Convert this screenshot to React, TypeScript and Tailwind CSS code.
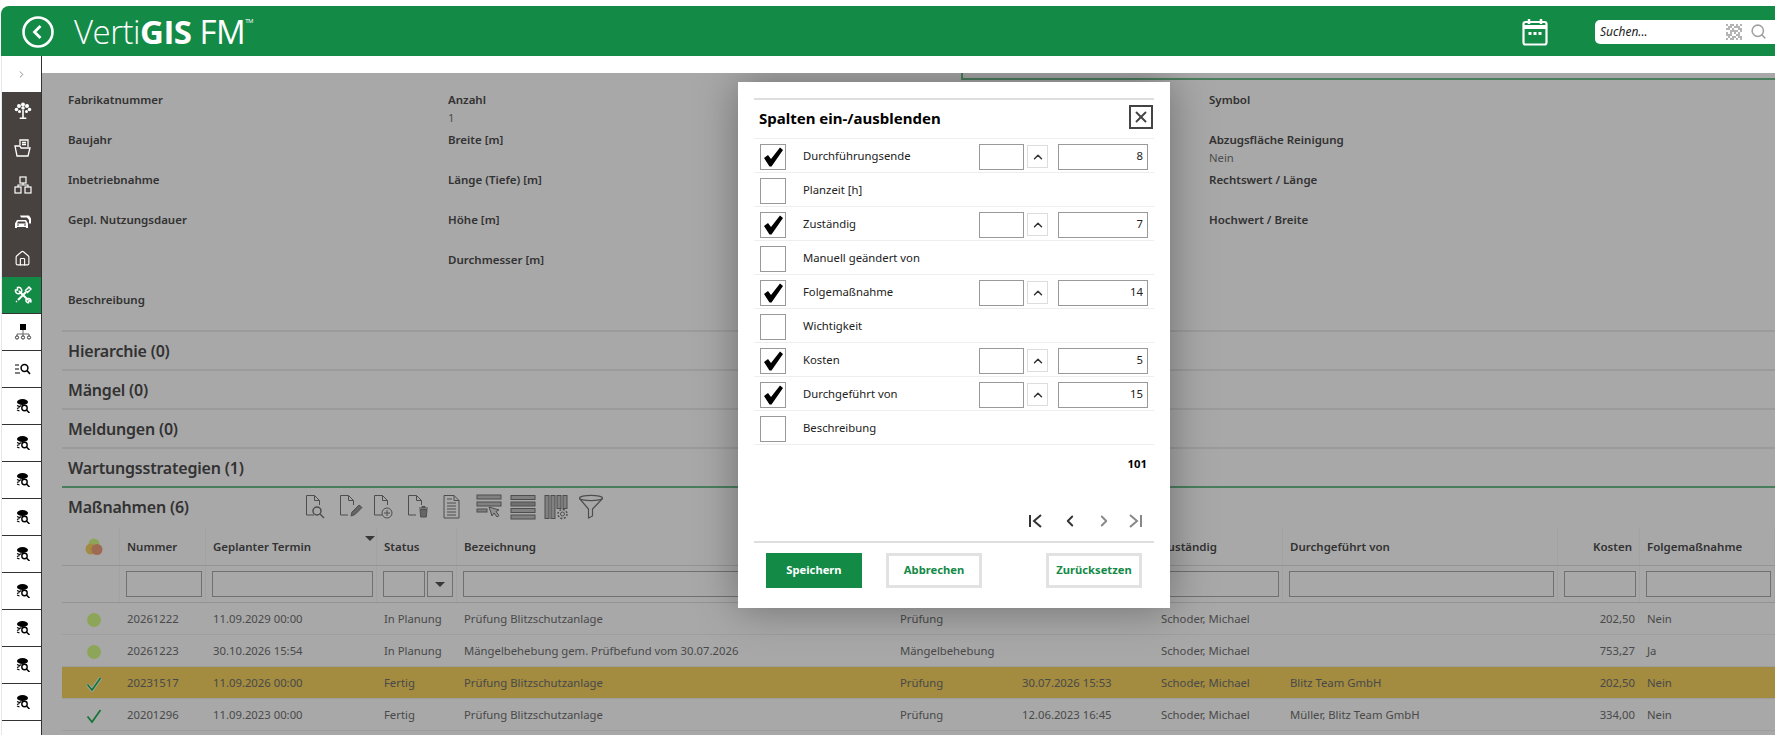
import { Home, Search, ChevronLeft, ChevronRight, ChevronUp, X } from "lucide-react"

const gridCols =
  "grid grid-cols-[58px_86px_171px_80px_436px_122px_139px_129px_275px_82px_135px]"

const formRows = [
  { a: "Fabrikatnummer", b: "Anzahl", bv: "1", d: "Symbol" },
  { a: "Baujahr", b: "Breite [m]", d: "Abzugsfläche Reinigung", dv: "Nein" },
  { a: "Inbetriebnahme", b: "Länge (Tiefe) [m]", d: "Rechtswert / Länge" },
  { a: "Gepl. Nutzungsdauer", b: "Höhe [m]", d: "Hochwert / Breite" },
  { a: "", b: "Durchmesser [m]", d: "" },
  { a: "Beschreibung", b: "", d: "" },
]

const tableRows = [
  { st: "dot", nr: "20261222", date: "11.09.2029 00:00", status: "In Planung", title: "Prüfung Blitzschutzanlage", art: "Prüfung", end: "", who: "Schoder, Michael", by: "", cost: "202,50", next: "Nein" },
  { st: "dot", nr: "20261223", date: "30.10.2026 15:54", status: "In Planung", title: "Mängelbehebung gem. Prüfbefund vom 30.07.2026", art: "Mängelbehebung", end: "", who: "Schoder, Michael", by: "", cost: "753,27", next: "Ja" },
  { st: "check", nr: "20231517", date: "11.09.2026 00:00", status: "Fertig", title: "Prüfung Blitzschutzanlage", art: "Prüfung", end: "30.07.2026 15:53", who: "Schoder, Michael", by: "Blitz Team GmbH", cost: "202,50", next: "Nein", active: true },
  { st: "check", nr: "20201296", date: "11.09.2023 00:00", status: "Fertig", title: "Prüfung Blitzschutzanlage", art: "Prüfung", end: "12.06.2023 16:45", who: "Schoder, Michael", by: "Müller, Blitz Team GmbH", cost: "334,00", next: "Nein" },
]

const dialogRows = [
  { label: "Durchführungsende", on: true, value: "8" },
  { label: "Planzeit [h]", on: false },
  { label: "Zuständig", on: true, value: "7" },
  { label: "Manuell geändert von", on: false },
  { label: "Folgemaßnahme", on: true, value: "14" },
  { label: "Wichtigkeit", on: false },
  { label: "Kosten", on: true, value: "5" },
  { label: "Durchgeführt von", on: true, value: "15" },
  { label: "Beschreibung", on: false },
]

// dotted square in the search box
const qrCells = [
  "10110101", "01101110", "11010011", "00111101",
  "10101010", "11100110", "01011011", "10110101",
]

function TreeIcon() {
  return (
    <svg width="18" height="18" viewBox="0 0 18 18" fill="#fff">
      <circle cx="9" cy="2.500" r="2" /><circle cx="5" cy="4" r="2" /><circle cx="13" cy="4" r="2" />
      <circle cx="2.500" cy="7.500" r="1.800" /><circle cx="15.500" cy="7.500" r="1.800" /><circle cx="5.500" cy="9.500" r="1.500" /><circle cx="12.500" cy="9.500" r="1.500" /><circle cx="9" cy="6" r="1.800" />
      <path d="M8.200 8h1.600v7.500h2.500V17H5.700v-1.500h2.500z" />
    </svg>
  )
}

function FolderIcon() {
  return (
    <svg width="18" height="18" viewBox="0 0 18 18" fill="none" stroke="#fff" strokeWidth="1.300">
      <path d="M6 6V1h8v7" /><path d="M8 3.500h4M8 5.500h4" />
      <path d="M1 7h5l1 2h9l-2 8H3z" />
    </svg>
  )
}

function OrgIcon() {
  return (
    <svg width="18" height="18" viewBox="0 0 18 18" fill="none" stroke="#fff" strokeWidth="1.200">
      <rect x="6" y="1" width="6" height="6" /><rect x="1" y="11" width="6" height="6" /><rect x="11" y="11" width="6" height="6" />
      <path d="M9 7v2M4 11V9h10v2" />
    </svg>
  )
}

function CarsIcon() {
  return (
    <svg width="18" height="18" viewBox="0 0 18 18" fill="#fff">
      <path d="M6 2.500h9l2 3v5h-2V7L13 4.500H7z" />
      <path d="M3 7h9l2 3.500V15h-2v-1H3v1H1v-4.500zM4 8.500l-1 2h9l-1-2zM3 11.500v1h2v-1zM10 11.500v1h2v-1z" fillRule="evenodd" />
    </svg>
  )
}

function ToolsIcon() {
  return (
    <svg width="18" height="18" viewBox="0 0 18 18" fill="none" stroke="#fff" strokeWidth="1.500">
      <path d="M5 5l9 9" strokeWidth="2" /><path d="M1.500 4A3 3 0 0 0 5.500 7.500 3 3 0 0 0 3.500 1.500v2.500z" />
      <path d="M14 12.500a2.500 2.500 0 0 1 2.800 3.300l-1.800-1.300-.5 2.200a2.500 2.500 0 0 1-2.500-3z" />
      <path d="M12 6l-8 8" strokeWidth="2" /><path d="M11.500 4.500L15 1l2 2-3.500 3.500z" /><path d="M2 15l1 1" />
    </svg>
  )
}

function NetworkIcon() {
  return (
    <svg width="18" height="16" viewBox="0 0 18 16" fill="none" stroke="#333" strokeWidth="1">
      <rect x="6" y="0" width="6" height="6" fill="#000" stroke="none" />
      <path d="M9 6v4M3 12v-2h12v2M9 10v2" stroke="#666" />
      <circle cx="3" cy="13.500" r="1.600" /><circle cx="9" cy="13.500" r="1.600" /><circle cx="15" cy="13.500" r="1.600" />
    </svg>
  )
}

function ListSearchIcon() {
  return (
    <svg width="16" height="12" viewBox="0 0 16 12" fill="none" stroke="#000" strokeWidth="1.200">
      <path d="M0 2h4M0 6h4M0 10h5" />
      <circle cx="9.500" cy="5" r="3.400" strokeWidth="1.500" /><path d="M12 7.500l3 3.500" strokeWidth="1.700" />
    </svg>
  )
}

function DbSearchIcon() {
  return (
    <svg width="14" height="14" viewBox="0 0 14 14" fill="none" stroke="#000">
      <ellipse cx="6.500" cy="3" rx="5.500" ry="3" fill="#000" stroke="none" />
      <path d="M1 6.500l2.500 1 2-1M1 9.500l2.500-1M1 11l2.500 1" strokeWidth="1.200" />
      <circle cx="8.500" cy="9" r="2.700" strokeWidth="1.400" fill="#fff" /><path d="M10.500 11l3 3" strokeWidth="1.500" />
    </svg>
  )
}

function DocBase({ children }: { children?: React.ReactNode }) {
  return (
    <svg width="26" height="26" viewBox="0 0 26 26" fill="none" stroke="#777" strokeWidth="1">
      <path d="M11 21H3.500V1.500h8l5 5V11" /><path d="M11.500 1.500v5h5" />
      {children}
    </svg>
  )
}

function TableToolbar() {
  return (
    <div className="flex items-center gap-[8px]">
      <DocBase><circle cx="14" cy="17" r="4" strokeWidth="1.500" /><path d="M17 20l4 4" strokeWidth="1.500" /></DocBase>
      <DocBase><path d="M14 22l1-4 7-7 3 2.500-7 7z" fill="#999" /></DocBase>
      <DocBase><circle cx="16" cy="19" r="5" /><path d="M16 16v6M13 19h6" /></DocBase>
      <DocBase><path d="M14 14h9M17 14v-1.500h3V14M15 15.500l.7 7.500h5.600l.7-7.500z" fill="#999" /></DocBase>
      <svg width="26" height="26" viewBox="0 0 26 26" fill="none" stroke="#777" strokeWidth="1">
        <path d="M5 24V1.500h10l5 5V24z" /><path d="M15 1.500v5h5" /><path d="M8 5h5M8 9h9M8 12h9M8 15h9M8 18h9M8 21h9" />
      </svg>
      <svg width="26" height="26" viewBox="0 0 26 26" fill="none" stroke="#777" strokeWidth="1" className="ml-[3px]">
        <rect x="1" y="1" width="24" height="4" fill="#c4c4c4" /><rect x="1" y="8" width="24" height="4" fill="#c4c4c4" /><rect x="1" y="15" width="10" height="3" fill="#c4c4c4" />
        <path d="M13 13l3 9 2-3 3 4 2-1.500-3-4 3-1.500z" fill="#ddd" />
      </svg>
      <svg width="26" height="26" viewBox="0 0 26 26" fill="none" stroke="#777" strokeWidth="1">
        <rect x="1" y="1.500" width="24" height="4" fill="#c4c4c4" /><rect x="1" y="8" width="24" height="4" fill="#aaa" /><rect x="1" y="14.500" width="24" height="4" fill="#c4c4c4" /><rect x="1" y="21" width="24" height="4" fill="#c4c4c4" />
      </svg>
      <svg width="26" height="26" viewBox="0 0 26 26" fill="none" stroke="#777" strokeWidth="1">
        <rect x="1" y="1.500" width="4" height="23" fill="#c4c4c4" /><rect x="7" y="1.500" width="4" height="23" fill="#c4c4c4" /><rect x="13" y="1.500" width="4" height="13" fill="#c4c4c4" /><rect x="19" y="1.500" width="4" height="13" fill="#c4c4c4" />
        <circle cx="18.500" cy="20" r="2" /><circle cx="18.500" cy="20" r="4.500" strokeDasharray="2 1.500" strokeWidth="1.500" />
      </svg>
      <svg width="26" height="26" viewBox="0 0 26 26" fill="none" stroke="#777" strokeWidth="1.200">
        <ellipse cx="13" cy="4" rx="11.500" ry="2.700" /><path d="M1.500 4.500L10.500 15v9l4-2v-7L24.500 4.500" />
      </svg>
    </div>
  )
}

function StatusMark({ type, active }: { type: string; active?: boolean }) {
  if (type === "dot") return <span className="w-[14px] h-[14px] rounded-full bg-[#d7fb88]" />
  return (
    <svg width="16" height="16" viewBox="0 0 16 16" fill="none">
      {active && <path d="M1.500 8.500l4.500 5.500 8.500-12" stroke="#fff" strokeWidth="3.500" />}
      <path d="M1.500 8.500l4.500 5.500 8.500-12" stroke="#22b455" strokeWidth="1.800" />
    </svg>
  )
}

function Sidebar() {
  const darkIcons = [<TreeIcon key="t" />, <FolderIcon key="f" />, <OrgIcon key="o" />, <CarsIcon key="c" />, <Home key="h" size={17} color="#fff" strokeWidth={1.6} />]
  const cell = "h-[37px] flex items-center justify-center pl-[2px]"
  return (
    <div className="w-[41px] shrink-0 border-l border-l-gray-200 border-r border-r-[#333] bg-white flex flex-col">
      <div className="h-[36px] flex items-center justify-center">
        <ChevronRight size={11} color="#888" />
      </div>
      {darkIcons.map((icon, i) => (
        <div key={i} className={`${cell} bg-[#47423f]`}>{icon}</div>
      ))}
      <div className={`${cell} bg-[#148a47] border-b border-b-[#333]`}><ToolsIcon /></div>
      <div className={`${cell} border-b border-b-[#333]`}><NetworkIcon /></div>
      <div className={`${cell} border-b border-b-[#333]`}><ListSearchIcon /></div>
      {Array.from({ length: 9 }).map((_, i) => (
        <div key={i} className={`${cell} border-b border-b-[#333]`}><DbSearchIcon /></div>
      ))}
    </div>
  )
}

function Header() {
  return (
    <div className="h-[50px] shrink-0 bg-[#148a47] rounded-tl-[8px] flex items-center text-white">
      <svg width="34" height="34" viewBox="0 0 34 34" fill="none" stroke="#fff" className="ml-[20px] mt-[2px]">
        <circle cx="17" cy="17" r="14.500" strokeWidth="2.600" /><path d="M19.500 11l-6 6 6 6" strokeWidth="2.800" />
      </svg>
      <div className="ml-[19px] flex items-start font-['Open_Sans',sans-serif] text-[33px] leading-none tracking-[-0.5px]">
        <span className="font-light">Verti</span><span className="font-bold">GIS</span><span className="font-normal">&nbsp;FM</span>
        <span className="text-[6px] mt-[3px]">TM</span>
      </div>
      <svg width="26" height="28" viewBox="0 0 26 28" fill="none" className="ml-auto mt-[1px]">
        <rect x="1.500" y="4" width="23" height="22.500" rx="2" stroke="#fff" strokeWidth="2.200" />
        <path d="M1.500 9h23" stroke="#fff" strokeWidth="4" /><path d="M7 1v5M19 1v5" stroke="#fff" strokeWidth="2.500" />
        <path d="M6.500 14h3v3h-3zM11.500 14h3v3h-3zM16.500 14h3v3h-3z" fill="#fff" />
      </svg>
      <div className="ml-[47px] w-[180px] h-[24px] mt-[1px] bg-white rounded-l-[5px] flex items-center pl-[5px] text-[#222]">
        <span className="text-[12px] italic">Suchen...</span>
        <svg width="16" height="16" viewBox="0 0 16 16" className="ml-auto" fill="#b4b4b4">
          {qrCells.map((line, y) =>
            line.split("").map((c, x) => (c === "1" ? <rect key={`${x}-${y}`} x={x * 2} y={y * 2} width="2" height="2" /> : null)),
          )}
        </svg>
        <Search size={17} color="#a0a0a0" strokeWidth={2.200} className="ml-[8px] mr-[8px]" />
      </div>
    </div>
  )
}

function FormField({ label, value }: { label: string; value?: string }) {
  return (
    <div className="h-[40px]">
      <div className="h-[20px] leading-[20px] text-[11.5px] font-semibold text-[#4d4d4d]">{label}</div>
      {value && <div className="h-[20px] leading-[16px] text-[#777]">{value}</div>}
    </div>
  )
}

function Section({ title }: { title: string }) {
  return (
    <div className="h-[39px] border-t-2 border-t-[#ebebeb] pl-[6px] flex items-center text-[16px] tracking-[-0.2px] font-semibold text-[#4d4d4d]">
      {title}
    </div>
  )
}

function FilterInput({ className }: { className?: string }) {
  return <div className={`h-[26px] border border-[#aaa] ${className ?? ""}`} />
}

function DataTable() {
  const headerCell = "h-[37px] flex items-center px-[7px] border-r border-r-[#f6f6f6] text-[11.5px] font-semibold text-[#4d4d4d]"
  const filterCell = "h-[36px] flex items-center pl-[6px] pr-[3px] border-r border-r-[#f6f6f6]"
  return (
    <div className="ml-[20px] w-[1713px]">
      <div className={`${gridCols} border-b border-b-[#e0e0e0]`}>
        <div className="h-[37px] flex items-center justify-center pl-[12px] pr-[5px] border-r border-r-[#f6f6f6]">
          <svg width="18" height="18" viewBox="0 0 18 18">
            <circle cx="9" cy="6" r="5.500" fill="#d7fb88" /><circle cx="6" cy="11" r="5.500" fill="#f8d264" /><circle cx="12" cy="11.500" r="5.500" fill="#f2a27e" />
          </svg>
        </div>
        <div className={headerCell}>Nummer</div>
        <div className={`${headerCell} relative`}>
          Geplanter Termin
          <span className="absolute right-[1px] top-[8px] border-x-[5px] border-x-transparent border-t-[5px] border-t-[#555]" />
        </div>
        <div className={headerCell}>Status</div>
        <div className={`${headerCell} col-span-3`}>Bezeichnung</div>
        <div className={headerCell}>Zuständig</div>
        <div className={headerCell}>Durchgeführt von</div>
        <div className={`${headerCell} justify-end`}>Kosten</div>
        <div className={headerCell}>Folgemaßnahme</div>
      </div>
      <div className={`${gridCols} border-b border-b-[#e0e0e0]`}>
        <div className={filterCell} />
        <div className={filterCell}><FilterInput className="w-full" /></div>
        <div className={filterCell}><FilterInput className="w-full" /></div>
        <div className={`${filterCell} gap-[2px]`}>
          <FilterInput className="w-[42px]" />
          <div className="w-[26px] h-[26px] border border-[#aaa] flex items-center justify-center">
            <span className="border-x-[5px] border-x-transparent border-t-[5px] border-t-[#555]" />
          </div>
        </div>
        <div className={`${filterCell} col-span-3`}><FilterInput className="w-full" /></div>
        <div className={filterCell}><FilterInput className="w-full" /></div>
        <div className={filterCell}><FilterInput className="w-full" /></div>
        <div className={filterCell}><FilterInput className="w-full" /></div>
        <div className={filterCell}><FilterInput className="w-full" /></div>
      </div>
      {tableRows.map((row) => (
        <div key={row.nr} className={`${gridCols} h-[32px] pt-[2px] items-center border-b border-b-[#f0f0f0] text-[#707070] ${row.active ? "bg-[#f7d461] text-[#5a5a5a]" : ""}`}>
          <div className="flex justify-center pl-[6px]"><StatusMark type={row.st} active={row.active} /></div>
          <div className="px-[7px]">{row.nr}</div>
          <div className="px-[7px]">{row.date}</div>
          <div className="px-[7px]">{row.status}</div>
          <div className="px-[7px] whitespace-nowrap">{row.title}</div>
          <div className="px-[7px] whitespace-nowrap">{row.art}</div>
          <div className="px-[7px]">{row.end}</div>
          <div className="px-[7px]">{row.who}</div>
          <div className="px-[7px]">{row.by}</div>
          <div className="px-[5px] text-right">{row.cost}</div>
          <div className="px-[7px]">{row.next}</div>
        </div>
      ))}
    </div>
  )
}

function ColumnDialog() {
  const outlineBtn = "w-[96px] h-[35px] border-[3px] border-[#e2e2e2] flex items-center justify-center font-bold text-[11.2px] text-[#148a47]"
  return (
    <div className="absolute left-[696px] top-[9px] w-[432px] h-[526px] bg-white px-[16px] pt-[16px] shadow-[0_0_40px_rgba(0,0,0,0.35)] text-[#222]">
      <div className="h-[41px] border-t-2 border-t-[#dedede] border-b border-b-[#eeeeee] flex items-center justify-between pl-[5px]">
        <span className="text-[15px] font-bold text-black mb-[2px]">Spalten ein-/ausblenden</span>
        <button className="w-[24px] h-[24px] border-2 border-[#444] flex items-center justify-center mr-[1px] mb-[4px]">
          <X size={18} color="#444" strokeWidth={2.500} />
        </button>
      </div>
      {dialogRows.map((row) => (
        <div key={row.label} className="h-[34px] pt-[2px] flex items-center border-b border-b-[#eeeeee] last:border-b-2 last:border-b-[#dedede]">
          <div className="ml-[6px] w-[26px] h-[26px] border border-[#999] flex items-center justify-center">
            {row.on && (
              <svg width="22" height="22" viewBox="0 0 22 22" fill="#000">
                <path d="M2 12l4-3 3 4L18 1.500l3 2.500L9.500 20.500h-2z" />
              </svg>
            )}
          </div>
          <span className="ml-[17px]">{row.label}</span>
          {row.value && (
            <div className="ml-auto mr-[6px] flex items-center">
              <div className="w-[45px] h-[26px] border border-[#999]" />
              <div className="ml-[3px] w-[21px] h-[23px] border border-[#ddd] flex items-center justify-center">
                <ChevronUp size={14} color="#333" strokeWidth={2.500} />
              </div>
              <div className="ml-[10px] w-[90px] h-[26px] border border-[#999] flex items-center justify-end pr-[4px]">{row.value}</div>
            </div>
          )}
        </div>
      ))}
      <div className="h-[38px] flex items-center justify-end pr-[7px] font-bold text-black">101</div>
      <div className="h-[52px] pt-[23px] flex items-center justify-end pr-[10px] gap-[16px]">
        <ChevronsLeftBar />
        <ChevronLeft size={18} color="#333" strokeWidth={2.500} />
        <ChevronRight size={18} color="#888" strokeWidth={2.500} />
        <ChevronsRightBar />
      </div>
      <div className="mt-[6px] border-t-2 border-t-[#dedede] pt-[10px] px-[12px] flex">
        <button className="w-[96px] h-[35px] bg-[#148a47] text-white font-bold text-[11.2px]">Speichern</button>
        <button className={`${outlineBtn} ml-[24px]`}>Abbrechen</button>
        <button className={`${outlineBtn} ml-auto`}>Zurücksetzen</button>
      </div>
    </div>
  )
}

function ChevronsLeftBar() {
  return (
    <svg width="18" height="18" viewBox="0 0 18 18" fill="none" stroke="#333" strokeWidth="2">
      <path d="M3 3v12M14 3L7 9l7 6" />
    </svg>
  )
}

function ChevronsRightBar() {
  return (
    <svg width="18" height="18" viewBox="0 0 18 18" fill="none" stroke="#888" strokeWidth="2" className="ml-[-3px]">
      <path d="M15 3v12M4 3l7 6-7 6" />
    </svg>
  )
}

export default function App() {
  return (
    <div className="w-[1775px] h-[735px] overflow-hidden bg-white pt-[6px] pl-[1px] flex flex-col font-['Noto_Sans',sans-serif] text-[11.3px]">
      <Header />
      <div className="flex flex-1 min-h-0">
        <Sidebar />
        <div className="flex-1 flex flex-col min-w-0">
          <div className="h-[17px] shrink-0" />
          <div className="relative flex-1 min-h-0 overflow-hidden">
            <div className="flex justify-end h-[7px]">
              <div className="w-[814px] border-l-2 border-b-2 border-[#70c08e]" />
            </div>
            <div className="ml-[26px] mt-[10px] grid grid-cols-[380px_380px_381px_380px]">
              {formRows.map((r) => (
                <div key={r.a + r.b} className="contents">
                  <FormField label={r.a} />
                  <FormField label={r.b} value={r.bv} />
                  <div />
                  <FormField label={r.d} value={r.dv} />
                </div>
              ))}
            </div>
            <div className="ml-[20px]">
              <Section title="Hierarchie (0)" />
              <Section title="Mängel (0)" />
              <Section title="Meldungen (0)" />
              <Section title="Wartungsstrategien (1)" />
              <div className="h-[42px] pb-[2px] border-t-2 border-t-[#70c08e] pl-[6px] flex items-center">
                <span className="w-[235px] text-[16px] tracking-[-0.2px] font-semibold text-[#4d4d4d]">Maßnahmen (6)</span>
                <TableToolbar />
              </div>
            </div>
            <DataTable />
            <div className="absolute inset-0 bg-black/34">
              <ColumnDialog />
            </div>
          </div>
        </div>
      </div>
    </div>
  )
}
